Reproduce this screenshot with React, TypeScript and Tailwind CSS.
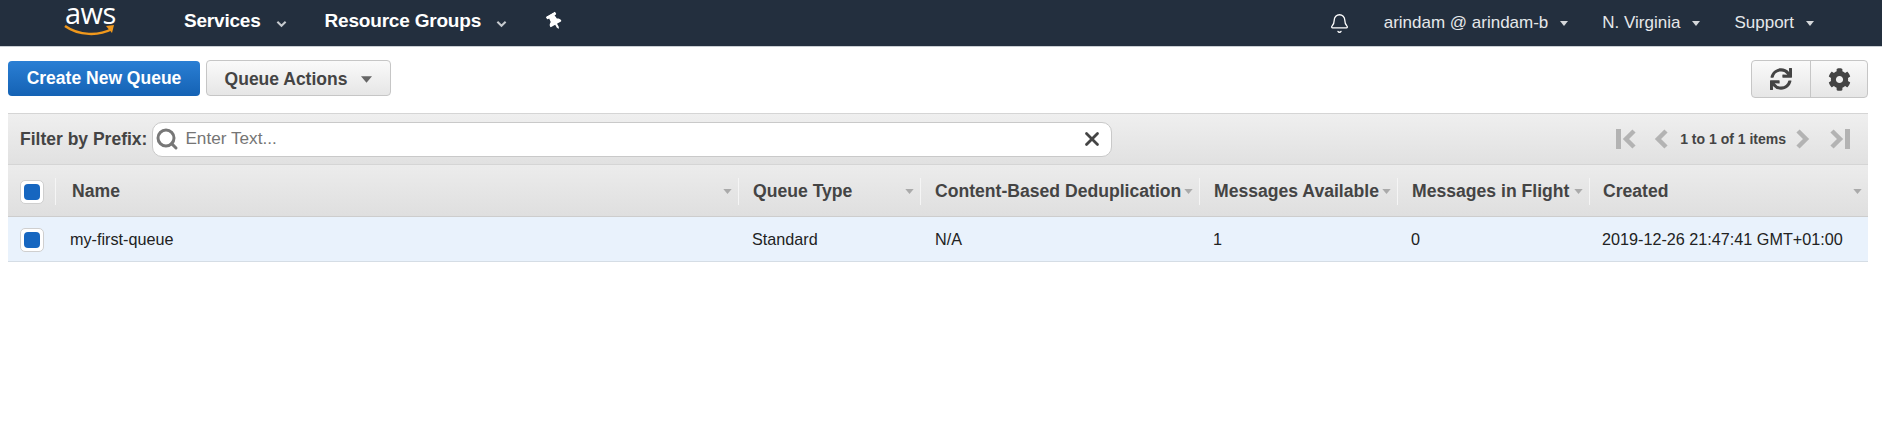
import { Bell, X, Search } from 'lucide-react';
import { FaCog, FaSync, FaThumbtack } from 'react-icons/fa';

const columns = [
  { label: 'Name', width: 'w-[683px]', value: 'my-first-queue' },
  { label: 'Queue Type', width: 'w-[182px]', value: 'Standard' },
  { label: 'Content-Based Deduplication', width: 'w-[279px]', value: 'N/A' },
  { label: 'Messages Available', width: 'w-[198px]', value: '1' },
  { label: 'Messages in Flight', width: 'w-[192px]', value: '0' },
  { label: 'Created', width: 'flex-1', value: '2019-12-26 21:47:41 GMT+01:00' },
];

function Caret({ className }: { className: string }) {
  return (
    <svg viewBox="0 0 10 6" className={className}>
      <path d="M0 0h10L5 6z" fill="currentColor" />
    </svg>
  );
}

function Chevron() {
  return (
    <svg viewBox="0 0 12 8" className="w-[11px] h-[8px] text-[#c6cace] mt-[4px]">
      <path d="M1.5 1.5L6 6l4.5-4.5" stroke="currentColor" strokeWidth="2.2" fill="none" />
    </svg>
  );
}

function Pager({ dir, bar }: { dir: 'left' | 'right'; bar?: boolean }) {
  return (
    <svg
      viewBox={bar ? '0 0 22 20' : '0 0 16 20'}
      className={`${bar ? 'w-[22px]' : 'w-[16px]'} h-[20px] text-[#b3b3b3] ${dir === 'left' ? '-scale-x-100' : ''}`}
    >
      <path d="M3 2l8 8-8 8" stroke="currentColor" strokeWidth="4.5" fill="none" />
      {bar && <rect x="16" y="0" width="5" height="20" fill="currentColor" />}
    </svg>
  );
}

function Checkbox() {
  return (
    <div className="w-[24px] h-[24px] rounded-[5px] border border-[#cfcfcf] bg-white flex items-center justify-center">
      <div className="w-[16px] h-[16px] rounded-[4px] bg-[#1666c0]" />
    </div>
  );
}

function NavItem({ label }: { label: string }) {
  return (
    <div className="flex items-center gap-[12px] text-[17px] text-[#e6e8ea]">
      <span>{label}</span>
      <Caret className="w-[8px] h-[5px] text-[#d5d8db]" />
    </div>
  );
}

export default function App() {
  return (
    <div className="w-[1882px] h-[444px] bg-white overflow-hidden font-['Liberation_Sans',Arial,sans-serif]">
      <header className="h-[47px] bg-[#232f3e] border-b border-[#c9ced3] flex items-center text-white">
        <div className="w-[184px] pl-[64px] h-full flex flex-col items-start shrink-0">
          <span className="font-['Open_Sans',sans-serif] text-[29px] leading-[24px] tracking-[-0.5px] mt-[1px] ml-[1px]">aws</span>
          <svg viewBox="0 0 52 14" className="w-[52px] h-[14px] -mt-[1px]">
            <path d="M1 2c14 10 34 10 47 3" stroke="#f0981c" strokeWidth="2.5" fill="none" />
            <path d="M42 2l8-1-2 8z" fill="#f0981c" />
          </svg>
        </div>
        <div className="flex items-center gap-[15px] text-[19px] font-bold tracking-[-0.2px] -mt-[3px]">
          <span>Services</span>
          <Chevron />
        </div>
        <div className="flex items-center gap-[15px] ml-[38px] text-[19px] font-bold tracking-[-0.2px] -mt-[3px]">
          <span>Resource Groups</span>
          <Chevron />
        </div>
        <FaThumbtack className="ml-[40px] w-[15px] h-[17px] -rotate-[30deg] -mt-[3px]" />
        <div className="ml-auto flex items-center pr-[68px]">
          <Bell className="w-[21px] h-[23px] mr-[34px]" strokeWidth={1.5} />
          <NavItem label="arindam @ arindam-b" />
          <div className="w-[34px]" />
          <NavItem label="N. Virginia" />
          <div className="w-[34px]" />
          <NavItem label="Support" />
        </div>
      </header>

      <div className="flex justify-between pl-[8px] pr-[14px] pt-[13px] h-[66px]">
        <div className="flex items-start gap-[6px]">
          <button className="w-[192px] h-[35px] mt-[1px] rounded-[4px] bg-gradient-to-b from-[#2a7fd4] to-[#1462b4] text-white text-[17.5px] font-bold">
            Create New Queue
          </button>
          <button className="w-[185px] h-[36px] rounded-[4px] border border-[#c6c6c6] bg-gradient-to-b from-[#fafafa] to-[#e6e6e6] text-[#444] text-[17.5px] font-bold flex items-center justify-center gap-[14px] pt-[2px]">
            Queue Actions
            <Caret className="w-[11px] h-[7px] text-[#666]" />
          </button>
        </div>
        <div className="flex h-[38px] w-[117px] rounded-[4px] border border-[#c6c6c6] bg-gradient-to-b from-[#fafafa] to-[#e6e6e6] text-[#444]">
          <div className="w-[59px] flex items-center justify-center border-r border-[#c6c6c6]">
            <FaSync className="w-[22px] h-[22px]" />
          </div>
          <div className="flex-1 flex items-center justify-center">
            <FaCog className="w-[23px] h-[23px]" />
          </div>
        </div>
      </div>

      <div className="mx-[8px] w-[1860px]">
        <div className="h-[52px] border-y border-[#d5d5d5] bg-gradient-to-b from-[#efefef] to-[#e1e1e1] flex items-center pl-[12px] pr-[17px]">
          <span className="text-[17.5px] font-bold text-[#444] mr-[5px]">Filter by Prefix:</span>
          <div className="w-[960px] h-[35px] bg-white border border-[#c9c9c9] rounded-[10px] flex items-center pl-[1px] pr-[8px]">
            <Search className="w-[24px] h-[24px] text-[#777] ml-[1px]" strokeWidth={3} />
            <span className="ml-[6px] text-[17.2px] text-[#757575] flex-1">Enter Text...</span>
            <X className="w-[22px] h-[22px] text-[#444]" strokeWidth={3} />
          </div>
          <div className="ml-auto flex items-center text-[#444]">
            <Pager dir="left" bar />
            <div className="w-[16px]" />
            <Pager dir="left" />
            <span className="text-[14px] font-bold ml-[11px] mr-[9px]">1 to 1 of 1 items</span>
            <Pager dir="right" />
            <div className="w-[18px]" />
            <Pager dir="right" bar />
          </div>
        </div>

        <div className="h-[52px] border-b border-[#cdcdcd] bg-gradient-to-b from-[#ececec] to-[#dfdfdf] flex items-center pt-[2px]">
          <div className="w-[48px] pl-[12px] h-[27px] flex items-center border-r border-[#f5f5f5] shrink-0">
            <Checkbox />
          </div>
          {columns.map((col, i) => (
            <div
              key={col.label}
              className={`${col.width} h-[27px] flex items-center justify-between pr-[6px] ${i === 0 ? 'pl-[16px]' : i === 5 ? 'pl-[13px]' : 'pl-[14px]'} ${i < 5 ? 'border-r border-[#f5f5f5]' : ''}`}
            >
              <span className="text-[17.6px] font-bold text-[#444] whitespace-nowrap">{col.label}</span>
              <Caret className="w-[9px] h-[5px] text-[#aaa] shrink-0" />
            </div>
          ))}
        </div>

        <div className="h-[45px] border-b border-[#d5dde5] bg-[#e9f2fc] flex items-center pt-[1px]">
          <div className="w-[48px] pl-[12px] shrink-0">
            <Checkbox />
          </div>
          {columns.map((col, i) => (
            <div
              key={col.label}
              className={`${col.width} ${i === 0 ? 'pl-[14px]' : i === 2 ? 'pl-[14px]' : i === 5 ? 'pl-[12px]' : 'pl-[13px]'} text-[16.2px] text-[#222] whitespace-nowrap`}
            >
              {col.value}
            </div>
          ))}
        </div>
      </div>
    </div>
  );
}
